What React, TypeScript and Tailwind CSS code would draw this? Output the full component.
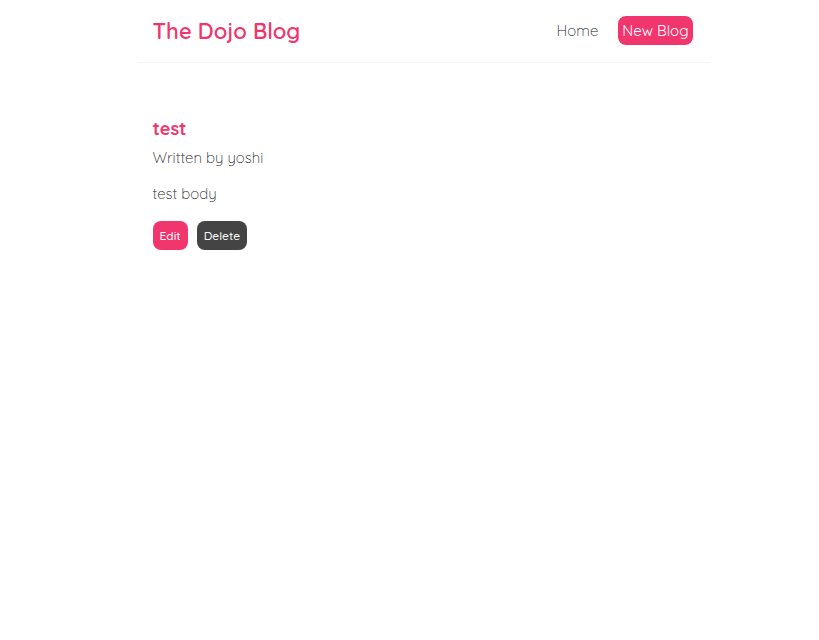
export default function App() {
  return (
    <div className="min-h-screen bg-white pl-7 font-[Quicksand,Lato,sans-serif] text-[15px] leading-5 font-light text-[#222]">
      <nav className="mx-auto flex w-full max-w-[574px] items-start border-b border-[#f2f2f2] px-4 py-4">
        <h1 className="text-[22px] leading-[30px] font-semibold text-[#f1356d]">The Dojo Blog</h1>
        <div className="ml-auto mr-[2px] flex items-center gap-4 leading-[19px]">
          <a href="#home" className="px-1 py-[5px]">Home</a>
          <a href="#create" className="rounded-lg bg-[#f1356d] px-1 py-[5px] font-normal text-white">New Blog</a>
        </div>
      </nav>
      <main className="mx-auto w-full max-w-[574px] px-4 pt-14">
        <article>
          <h2 className="text-lg leading-5 font-bold text-[#f1356d]">test</h2>
          <p className="mt-[9px]">Written by yoshi</p>
          <div className="mt-4 mb-[17px]">test body</div>
          <div className="flex gap-[9px] text-xs font-medium">
            <button className="h-[29px] rounded-lg bg-[#f1356d] px-[7px] text-white">Edit</button>
            <button className="h-[29px] rounded-lg bg-[#444] px-[7px] text-white">Delete</button>
          </div>
        </article>
      </main>
    </div>
  );
}
